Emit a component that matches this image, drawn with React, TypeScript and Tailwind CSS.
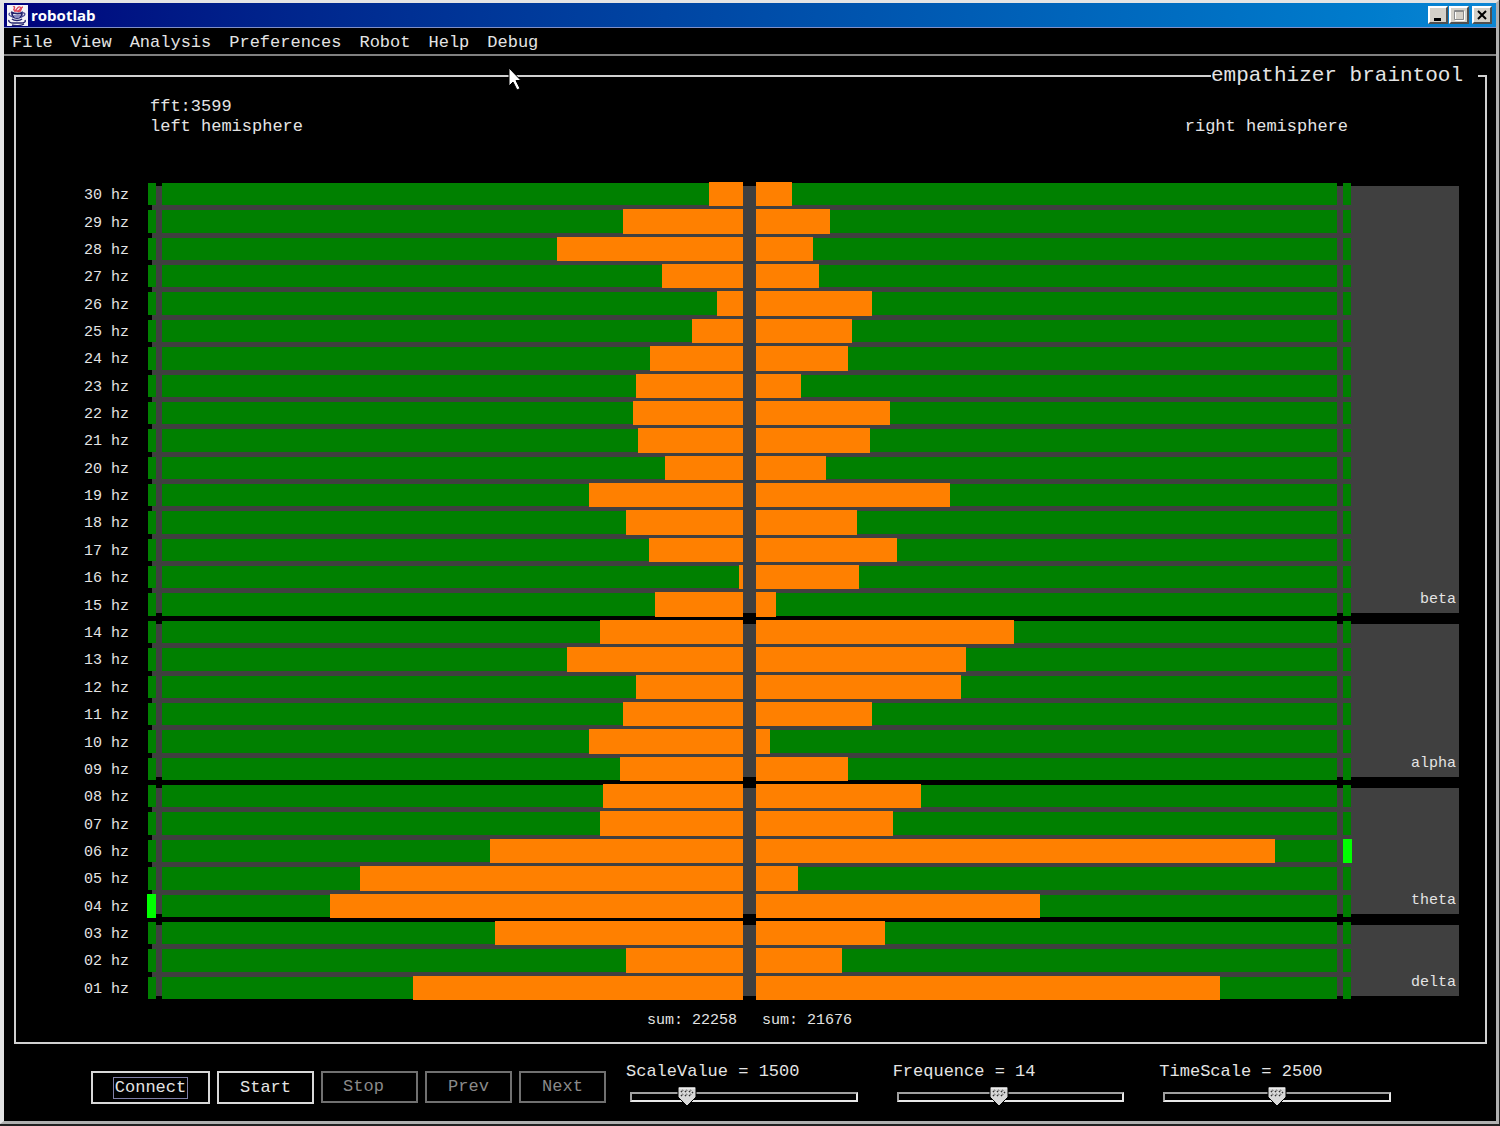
import { useState } from 'react';

type Row = { hz: string; left: number; right: number; peak?: 'left' | 'right' };
type Band = { name: string; grow: string; rows: Row[] };

// left / right are percentages of one hemisphere's width
const bands: Band[] = [
  {
    name: 'beta',
    grow: 'grow-16',
    rows: [
      { hz: '30', left: 5.8, right: 6.2 },
      { hz: '29', left: 20.6, right: 12.7 },
      { hz: '28', left: 32.1, right: 9.8 },
      { hz: '27', left: 13.9, right: 10.9 },
      { hz: '26', left: 4.5, right: 19.9 },
      { hz: '25', left: 8.7, right: 16.6 },
      { hz: '24', left: 16, right: 15.9 },
      { hz: '23', left: 18.4, right: 7.8 },
      { hz: '22', left: 18.9, right: 23 },
      { hz: '21', left: 18, right: 19.7 },
      { hz: '20', left: 13.5, right: 12.1 },
      { hz: '19', left: 26.5, right: 33.4 },
      { hz: '18', left: 20.2, right: 17.4 },
      { hz: '17', left: 16.2, right: 24.2 },
      { hz: '16', left: 0.7, right: 17.7 },
      { hz: '15', left: 15.1, right: 3.5 },
    ],
  },
  {
    name: 'alpha',
    grow: 'grow-6',
    rows: [
      { hz: '14', left: 24.7, right: 44.4 },
      { hz: '13', left: 30.3, right: 36.1 },
      { hz: '12', left: 18.4, right: 35.2 },
      { hz: '11', left: 20.6, right: 19.9 },
      { hz: '10', left: 26.5, right: 2.4 },
      { hz: '09', left: 21.2, right: 15.9 },
    ],
  },
  {
    name: 'theta',
    grow: 'grow-5',
    rows: [
      { hz: '08', left: 24.1, right: 28.4 },
      { hz: '07', left: 24.7, right: 23.5 },
      { hz: '06', left: 43.6, right: 89.3, peak: 'right' },
      { hz: '05', left: 66, right: 7.2 },
      { hz: '04', left: 71.1, right: 48.9, peak: 'left' },
    ],
  },
  {
    name: 'delta',
    grow: 'grow-3',
    rows: [
      { hz: '03', left: 42.7, right: 22.2 },
      { hz: '02', left: 20.2, right: 14.8 },
      { hz: '01', left: 56.8, right: 79.9 },
    ],
  },
];

const menus = ['File', 'View', 'Analysis', 'Preferences', 'Robot', 'Help', 'Debug'];

function JavaCup() {
  return (
    <svg viewBox="0 0 21 21" className="h-[21px] w-[21px] bg-[#f4f4f8]" fill="none">
      <path d="M6 2c2-1 2 1 1 2s1 2 2 1 2-4 4-3-1 3-2 4 2 1 3-1 0-3 2-3M7 6h7" stroke="#e0485c" strokeWidth="1.3" />
      <path d="M4 7c4 2 9 2 12 0M5 8c0 3 2 5 5 5s5-2 5-5" stroke="#23236e" strokeWidth="1.8" />
      <path d="M15 8c4-1 4 3-1 4M3 8c-2 1-1 3 3 4" stroke="#4a4a94" strokeWidth="1.3" />
      <path d="M6 10h8l-2 3H8z" fill="#8a8ac0" />
      <path d="M5 14c2 2 8 2 10 0M2 15c-1 2 2 3 4 3h8c3 0 5-1 4-3M5 20c3 1 9 1 12-1" stroke="#23236e" strokeWidth="1.4" />
    </svg>
  );
}

function TitleBar() {
  const btn =
    'flex h-[18px] w-5 items-center justify-center border-2 border-t-white border-l-white border-r-[#505050] border-b-[#505050] bg-[#d4d0c8]';
  return (
    <header className="flex h-[25px] items-center border-b border-[#8090c8] bg-linear-to-r from-[#00007c] to-[#0c86d4] pr-1 pl-[3px]">
      <JavaCup />
      <h1 className="ml-[3px] flex-1 font-['Open_Sans','Noto_Sans',sans-serif] text-[15px] leading-5 font-bold text-white">
        robotlab
      </h1>
      <button aria-label="Minimize" className={btn}>
        <svg viewBox="0 0 16 14" className="h-[14px] w-4"><path d="M4 10h7v3H4z" fill="#000" /></svg>
      </button>
      <button aria-label="Maximize" className={`${btn} ml-px`}>
        <svg viewBox="0 0 16 14" className="h-[14px] w-4" fill="none">
          <path d="M4.5 3.500h9v9h-9z" stroke="#fff" />
          <path d="M3.500 2.500h9v9h-9zM3.500 3.500h9" stroke="#8a8a8a" />
        </svg>
      </button>
      <button aria-label="Close" className={`${btn} ml-[3px]`}>
        <svg viewBox="0 0 16 14" className="h-[14px] w-4"><path d="M4 3l8 8M12 3l-8 8" stroke="#000" strokeWidth="2" /></svg>
      </button>
    </header>
  );
}

function FrequencyRow({ row }: { row: Row }) {
  return (
    <div className="flex flex-1 pb-[5px]">
      <div className="flex w-[64px] items-center pt-1 text-[15px] leading-4">{row.hz} hz</div>
      <div className={row.peak === 'left' ? '-my-px -ml-px w-[9px] bg-[#00ff00]' : 'w-2 bg-[#008000]'} />
      <div className="w-[6px]" />
      <div className="flex flex-1 justify-end bg-[#008000]">
        <div className="-my-px bg-[#ff8000]" style={{ width: `${row.left}%` }} />
      </div>
      <div className="w-[13px]" />
      <div className="flex flex-1 bg-[#008000]">
        <div className="-my-px bg-[#ff8000]" style={{ width: `${row.right}%` }} />
      </div>
      <div className="w-[6px]" />
      <div className={row.peak === 'right' ? '-my-px -mr-px w-[9px] bg-[#00ff00]' : 'w-2 bg-[#008000]'} />
      <div className="w-[108px]" />
    </div>
  );
}

function BandGroup({ band }: { band: Band }) {
  return (
    <section className={`grid basis-0 ${band.grow}`}>
      <div className="col-start-1 row-start-1 mt-[3px] mb-2 ml-[68px] flex items-end justify-end bg-[#404040] pr-[3px] pb-[3px] text-[15px] leading-5">
        {band.name}
      </div>
      <div className="z-10 col-start-1 row-start-1 flex flex-col">
        {band.rows.map((row) => (
          <FrequencyRow key={row.hz} row={row} />
        ))}
      </div>
    </section>
  );
}

function Slider({ label, min, max, initial }: { label: string; min: number; max: number; initial: number }) {
  const [value, setValue] = useState(initial);
  const pos = ((value - min) / (max - min)) * 100;
  return (
    <div>
      <label htmlFor={label} className="block leading-5 whitespace-nowrap">
        {label} = {value}
      </label>
      <div className="relative mt-[10px] mr-[35px] ml-1">
        <input
          id={label}
          type="range"
          min={min}
          max={max}
          value={value}
          onChange={(e) => setValue(Number(e.target.value))}
          className="block h-[10px] w-full appearance-none border-2 border-t-[#a0a0a0] border-r-[#e8e8e8] border-b-[#e8e8e8] border-l-[#a0a0a0] bg-black [&::-webkit-slider-thumb]:h-1 [&::-webkit-slider-thumb]:w-px [&::-webkit-slider-thumb]:appearance-none"
        />
        <svg
          viewBox="0 0 20 21"
          className="pointer-events-none absolute -top-[6px] h-[21px] w-5 -translate-x-1/2"
          style={{ left: `${pos}%` }}
        >
          <path d="M1 1h18v10l-9 9-9-9z" fill="#d8d8d8" stroke="#000" />
          <path d="M2 2h16" stroke="#fff" />
          <path d="M4 6l2-2M8 6l2-2M12 6l2-2M4 10l2-2M8 10l2-2M12 10l2-2M15 7l1-1" stroke="#333" strokeWidth="1.5" strokeDasharray="1.5 0.7" />
        </svg>
      </div>
    </div>
  );
}

export default function App() {
  const active = 'h-[33px] border-2 border-[#d8d8d8]';
  const disabled = 'h-8 border-2 border-[#707070] text-[#8a8a8a]';
  return (
    <div className="flex min-h-screen flex-col bg-[#202020] pr-px pb-[2px] font-['Liberation_Mono',monospace] text-[17px] text-[#e4e4e4]">
      <div className="flex flex-1 flex-col border-t-3 border-r-3 border-b-3 border-l-4 border-t-[#e4e4e4] border-r-[#b0b0b0] border-b-[#b0b0b0] border-l-[#e4e4e4] bg-black">
        <TitleBar />
        <nav className="flex h-7 items-center gap-[18px] border-b-2 border-[#808080] pt-1 pl-2">
          {menus.map((m) => (
            <button key={m} className="leading-5">{m}</button>
          ))}
        </nav>

        <section className="mt-[19px] mr-[9px] ml-[10px] flex flex-1 flex-col border-x-2 border-b-2 border-[#d0d0d0]">
          {/* title set into the top rule */}
          <div className="-mt-[13px] flex items-center">
            <span className="h-[2px] flex-1 bg-[#d0d0d0]" />
            <h2 className="pr-[15px] text-[21px] leading-7">empathizer braintool</h2>
            <span className="h-[2px] w-[7px] bg-[#d0d0d0]" />
          </div>

          <div className="flex flex-1 flex-col pr-[26px] pl-[68px]">
            <div className="flex items-end justify-between pt-[7px] pr-[111px] pl-[66px] leading-5">
              <p>
                fft:3599
                <br />
                left hemisphere
              </p>
              <p>right hemisphere</p>
            </div>

            <div className="mt-[46px] flex flex-1 flex-col">
              {bands.map((band) => (
                <BandGroup key={band.name} band={band} />
              ))}
            </div>

            <div className="mt-[7px] mb-[11px] flex gap-[13px] pr-[122px] pl-[78px] text-[15px] leading-5">
              <p className="flex-1 pr-[9px] text-right">sum: 22258</p>
              <p className="flex-1 pl-[3px]">sum: 21676</p>
            </div>
          </div>
        </section>

        <footer className="flex h-[77px] pt-[18px] pr-[70px] pl-[87px]">
          <div className="mt-[9px] mr-5 flex items-start gap-[7px]">
            <button className={`${active} w-[119px]`}>
              <span className="inline-block border border-[#8080a8] px-px leading-5">Connect</span>
            </button>
            <button className={`${active} w-[97px]`}>Start</button>
            <button disabled className={`${disabled} w-[97px] pr-3`}>Stop</button>
            <button disabled className={`${disabled} w-[87px]`}>Prev</button>
            <button disabled className={`${disabled} w-[87px]`}>Next</button>
          </div>
          <div className="grid flex-1 grid-cols-3">
            <Slider label="ScaleValue" min={0} max={6000} initial={1500} />
            <Slider label="Frequence" min={1} max={30} initial={14} />
            <Slider label="TimeScale" min={0} max={5000} initial={2500} />
          </div>
        </footer>
      </div>

      {/* mouse pointer */}
      <svg viewBox="0 0 14 24" className="pointer-events-none absolute top-[67px] left-[508px] h-6 w-[14px]">
        <path d="M1 1v18l4-4 4 8 3-1.5-4-8h5z" fill="#fff" stroke="#000" />
      </svg>
    </div>
  );
}
